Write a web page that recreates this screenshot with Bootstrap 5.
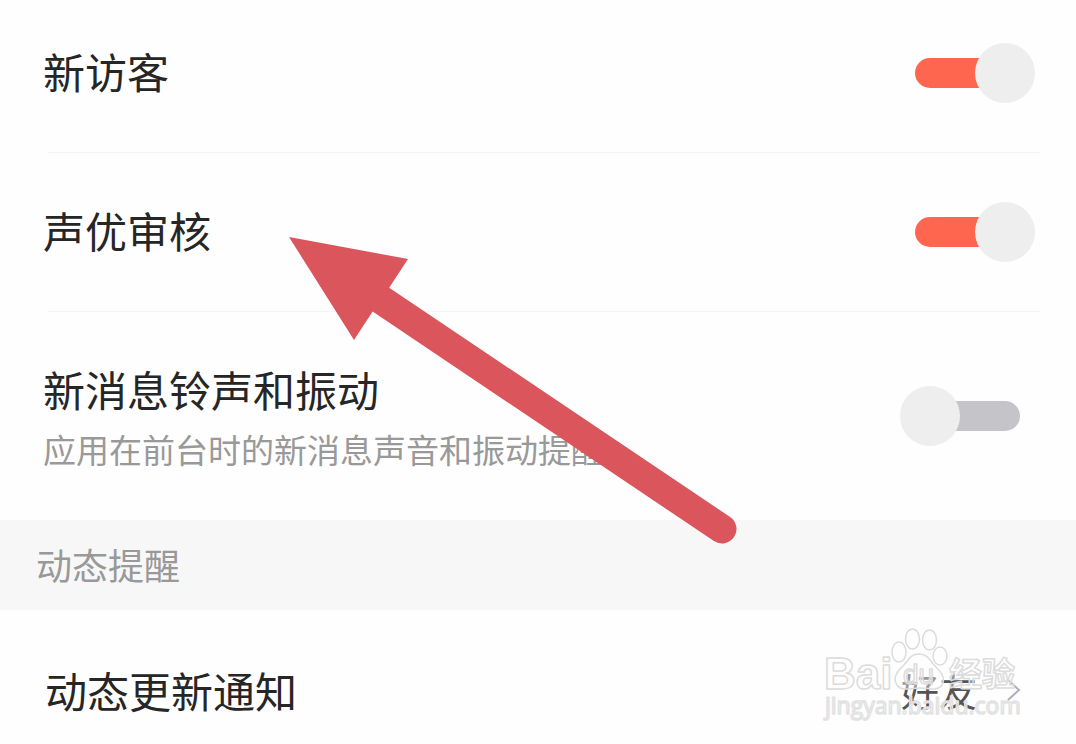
<!DOCTYPE html>
<html lang="zh-CN">
<head>
<meta charset="utf-8">
<meta name="viewport" content="width=device-width, initial-scale=1">
<title>消息提醒设置</title>
<link href="https://cdn.jsdelivr.net/npm/bootstrap@5.3.0/dist/css/bootstrap.min.css" rel="stylesheet">
<style>
  body { font-family: "Noto Sans CJK SC", sans-serif; color: #262626; background: #fefefe; overflow-x: hidden; }
  .setting { padding: 49px 41px 49px 43px; }
  .setting.first { padding-top: 43px; }
  .setting.two-line { padding-bottom: 39px; }
  .setting.two-line .toggle { margin-bottom: 10px; }
  .setting.linked { padding: 52px 54px 22px 45px; }
  .divider { height: 1px; margin: 0 36px 0 48px; background: #f4f4f4; }
  .title, .hint, .choice { line-height: 56px; padding-bottom: 4px; }
  .title { font-size: 42px; }
  .hint { font-size: 33px; color: #999; }
  .section-head { font-size: 36px; line-height: 88px; padding: 0 0 2px 36px; margin: 0; font-weight: 400; color: #999; background: #f7f7f7; }
  .toggle { appearance: none; position: relative; width: 135px; height: 60px; margin: 0; cursor: pointer; }
  .toggle::before { content: ""; position: absolute; inset: 15px; border-radius: 15px; background: #c5c4c9; }
  .toggle::after { content: ""; position: absolute; left: 0; top: 0; width: 60px; height: 60px; border-radius: 50%; background: #eee; }
  .toggle:checked::before { background: #ff6650; }
  .toggle:checked::after { left: 75px; }
  .choice { font-size: 38px; gap: 29px; color: #555; }
  .pointer { left: 280px; top: 230px; pointer-events: none; }
  .watermark { right: 52px; top: 14px; pointer-events: none; }
</style>
</head>
<body>
<main class="position-relative">
  <div class="setting first d-flex align-items-center justify-content-between">
    <label class="title" for="visitor">新访客</label>
    <input class="toggle" type="checkbox" role="switch" id="visitor" checked>
  </div>
  <div class="divider"></div>
  <div class="setting d-flex align-items-center justify-content-between">
    <label class="title" for="audit">声优审核</label>
    <input class="toggle" type="checkbox" role="switch" id="audit" checked>
  </div>
  <div class="divider"></div>
  <div class="setting two-line d-flex align-items-center justify-content-between">
    <label for="sound">
      <span class="title d-block">新消息铃声和振动</span>
      <span class="hint d-block">应用在前台时的新消息声音和振动提醒</span>
    </label>
    <input class="toggle" type="checkbox" role="switch" id="sound">
  </div>
  <h2 class="section-head">动态提醒</h2>
  <div class="setting linked position-relative d-flex align-items-center justify-content-between">
    <span class="title">动态更新通知</span>
    <a href="#" class="choice d-flex align-items-center text-decoration-none">好友
      <svg width="16" height="24" viewBox="0 0 16 24" fill="none" stroke="#b0b0bb" stroke-width="2" aria-hidden="true"><path d="M2 2 13 12 2 22"/></svg>
    </a>
    <svg class="watermark position-absolute" width="204" height="104" viewBox="820 624 204 104" fill="#fff" fill-opacity=".4" stroke="#dcdcdc" stroke-width="1.500" stroke-linejoin="round" aria-hidden="true">
      <text x="824" y="689" font-size="44" font-weight="700" font-family="Liberation Sans, sans-serif">Bai</text>
      <ellipse cx="899" cy="652" rx="7" ry="10"/>
      <ellipse cx="912.500" cy="639" rx="7" ry="10"/>
      <ellipse cx="929.500" cy="640" rx="7" ry="10"/>
      <ellipse cx="940" cy="656" rx="7" ry="9"/>
      <path d="M919 654c-10 0-11 8-17 13-6 5-9 12-5 18 5 7 15 3 23 3s17 4 22-3c4-7-1-13-7-19-5-5-7-12-16-12Z"/>
      <text x="903" y="684" font-size="28" font-family="Liberation Sans, sans-serif">du</text>
      <text x="949" y="686" font-size="33" font-weight="700" font-family="Noto Sans CJK SC, sans-serif">经验</text>
      <text x="825" y="714" font-size="23" font-family="Open Sans, sans-serif" stroke="#e2e2e2">jingyan.baidu.com</text>
    </svg>
  </div>
  <svg class="pointer position-absolute" width="470" height="330" viewBox="280 230 470 330" fill="#da565c" aria-hidden="true">
    <path d="M289 237 408 259 389 288 373 311 354 340Z"/>
    <path d="M380 299 722 529" stroke="#da565c" stroke-width="29" stroke-linecap="round"/>
  </svg>
</main>
<script src="https://cdn.jsdelivr.net/npm/bootstrap@5.3.0/dist/js/bootstrap.bundle.min.js"></script>
</body>
</html>
